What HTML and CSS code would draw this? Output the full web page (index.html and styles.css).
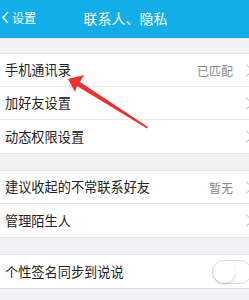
FILE: index.html
```html
<!DOCTYPE html>
<html lang="zh">
<head>
<meta charset="utf-8">
<link rel="stylesheet" href="styles.css">
</head>
<body>
<div class="page">
  <header class="nav">
    <div class="back">
      <svg class="back-icon" width="7" height="13" viewBox="0 0 7 13"><path d="M6 1 L1 6.5 L6 12" fill="none" stroke="#fff" stroke-width="1.4"/></svg>
      <span>设置</span>
    </div>
    <div class="title">联系人、隐私</div>
  </header>
  <div class="gap first"></div>
  <section class="group">
    <div class="row"><span class="label">手机通讯录</span><span class="value">已匹配</span><span class="chev"></span></div>
    <div class="row"><span class="label">加好友设置</span><span class="chev"></span></div>
    <div class="row"><span class="label">动态权限设置</span><span class="chev"></span></div>
  </section>
  <div class="gap"></div>
  <section class="group">
    <div class="row"><span class="label">建议收起的不常联系好友</span><span class="value">暂无</span><span class="chev"></span></div>
    <div class="row"><span class="label">管理陌生人</span><span class="chev"></span></div>
  </section>
  <div class="gap"></div>
  <section class="group">
    <div class="row"><span class="label">个性签名同步到说说</span><span class="toggle"><span class="knob"></span></span></div>
  </section>
  <svg class="arrow" width="249" height="300" viewBox="0 0 249 300">
    <polygon points="68,79 84,75 80,82 148,127 147,128.5 77,86 75,92" fill="#f0302c"/>
  </svg>
</div>
</body>
</html>
```

FILE: styles.css
```css
* { box-sizing: border-box; }
html, body { margin: 0; padding: 0; }
body {
  width: 249px;
  height: 300px;
  overflow: hidden;
  background: #f1f1f6;
  font-family: "Noto Sans CJK SC", "Noto Sans", sans-serif;
}
.page { position: relative; width: 249px; height: 300px; }
.nav {
  height: 38px;
  background: #12aee9;
  color: #fff;
  display: flex;
  align-items: center;
  position: relative;
  border-bottom: 1px solid #0ea6df;
}
.back {
  display: flex;
  align-items: center;
  gap: 3px;
  padding-left: 2px;
  font-size: 12px;
  line-height: 14px;
  margin-top: -2px;
}
.back-icon { display: block; }
.title {
  position: absolute;
  left: 0; right: 0;
  text-align: center;
  font-size: 14px;
  line-height: 16px;
  margin-top: -2px;
  padding-left: 2px;
}
.gap { height: 16px; }
.gap.first { height: 15px; }
.group {
  background: #fff;
  border-top: 1px solid #e3e3e8;
  border-bottom: 1px solid #e3e3e8;
}
.row {
  height: 33px;
  display: flex;
  align-items: center;
  padding-left: 5px;
  border-bottom: 1px solid #e6e6e9;
}
.row:last-child { border-bottom: none; }
.label {
  flex: 1;
  font-size: 13.2px;
  color: #222;
  line-height: 16px;
}
.value {
  font-size: 12px;
  color: #8a8a8a;
  margin-right: 9px;
}
.chev {
  width: 9px;
  height: 9px;
  border-top: 1.2px solid #c4c4c8;
  border-right: 1.2px solid #c4c4c8;
  transform: rotate(45deg);
  margin-right: -2px;
  flex: none;
}
.toggle {
  width: 40px;
  height: 24px;
  border: 1px solid #dcdcdf;
  border-radius: 12px;
  margin-right: -3px;
  background: #fff;
  position: relative;
  flex: none;
}
.knob {
  position: absolute;
  left: 0; top: 0;
  width: 22px;
  height: 22px;
  border-radius: 50%;
  background: #fff;
  box-shadow: 0 1px 2px rgba(0,0,0,0.22);
}
.arrow { position: absolute; left: 0; top: 0; pointer-events: none; }
```
